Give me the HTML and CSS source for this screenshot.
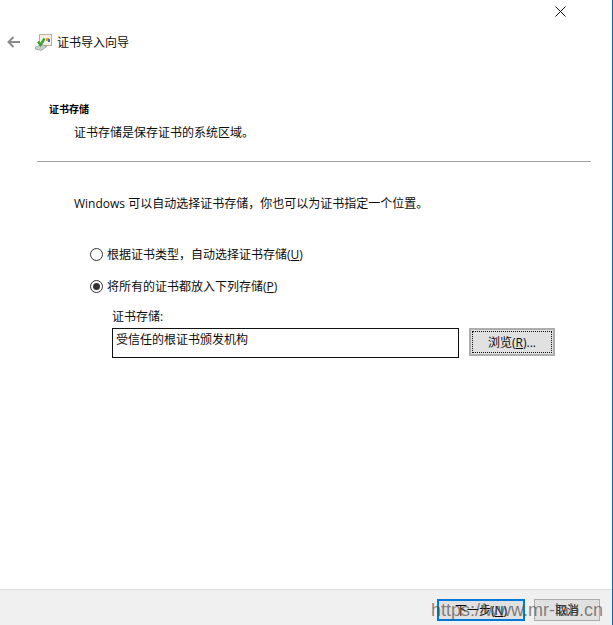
FILE: index.html
```html
<!DOCTYPE html>
<html lang="zh-CN">
<head>
    <meta charset="UTF-8">
    <title>证书导入向导</title>
    <link rel="stylesheet" href="styles.css">
</head>
<body>
    <div class="wizard">
        <div class="close-row">
            <svg class="close-icon" width="11" height="11" viewBox="0 0 11 11"><path d="M0.5 0.5L10.5 10.5M10.5 0.5L0.5 10.5" stroke="#111" stroke-width="1" fill="none"/></svg>
        </div>

        <div class="title-row">
            <svg class="back-icon" width="14" height="12" viewBox="0 0 14 12"><path d="M13 6H2M6.5 1L1.5 6L6.5 11" stroke="#8a8a8a" stroke-width="2" fill="none"/></svg>
            <svg class="wizard-icon" width="17" height="17" viewBox="0 0 17 17">
                <rect x="4.5" y="0.5" width="12" height="11" fill="#f6f1e6" stroke="#bdae98"/>
                <rect x="11" y="4" width="3" height="3" fill="#e0a030"/>
                <rect x="13" y="5" width="2" height="3" fill="#3b6fc0"/>
                <path d="M0.5 13L7 10.5L12 12.5L6 16.5L0.5 15Z" fill="#c9cdd0" stroke="#8c9296" stroke-width="0.7"/>
                <path d="M3 7.5L5.5 11L9.5 4.5" stroke="#3aa52e" stroke-width="2.4" fill="none"/>
            </svg>
            <span class="wizard-title">证书导入向导</span>
        </div>

        <div class="header">
            <div class="header-title">证书存储</div>
            <div class="header-desc">证书存储是保存证书的系统区域。</div>
        </div>

        <div class="divider"></div>

        <div class="content">
            <p class="intro">Windows 可以自动选择证书存储，你也可以为证书指定一个位置。</p>

            <div class="radio-row">
                <span class="radio"></span>
                <span>根据证书类型，自动选择证书存储(<u>U</u>)</span>
            </div>
            <div class="radio-row">
                <span class="radio checked"></span>
                <span>将所有的证书都放入下列存储(<u>P</u>)</span>
            </div>

            <div class="store">
                <div class="store-label">证书存储:</div>
                <div class="store-row">
                    <div class="store-input">受信任的根证书颁发机构</div>
                    <div class="btn browse"><span class="focus-ring">浏览(<u>R</u>)...</span></div>
                </div>
            </div>
        </div>

        <div class="footer">
            <div class="btn next">下一步(<u>N</u>)</div>
            <div class="btn cancel">取消</div>
            <div class="watermark">https://www.mr-lab.cn</div>
        </div>
    </div>
</body>
</html>
```

FILE: styles.css
```css
html, body {
    margin: 0;
    height: 100%;
}

body {
    font-family: "Open Sans", "Noto Sans CJK SC", sans-serif;
    font-size: 12px;
    color: #0c0c0c;
    background-color: #fff;
}

.wizard {
    width: 612px;
    height: 625px;
    border-right: 1px solid #0b63b5;
    display: flex;
    flex-direction: column;
}

.close-row {
    height: 33px;
    padding: 6px 46px 0 0;
    box-sizing: border-box;
    display: flex;
    justify-content: flex-end;
}

.title-row {
    display: flex;
    align-items: center;
    height: 18px;
    padding-left: 7px;
}

.wizard-icon {
    margin-left: 14px;
}

.wizard-title {
    margin-left: 5px;
}

.header {
    margin-top: 50px;
    padding-left: 49px;
}

.header-title {
    font-size: 10px;
    font-weight: bold;
    line-height: 16px;
    color: #000;
}

.header-desc {
    margin: 8px 0 0 25px;
    line-height: 16px;
}

.divider {
    margin: 20px 21px 0 37px;
    border-top: 1px solid #a0a0a0;
}

.content {
    flex: 1;
    padding-left: 74px;
}

.intro {
    margin: 34px 0 0;
    line-height: 16px;
    font-size: 12px;
}

.radio-row {
    display: flex;
    align-items: center;
    height: 16px;
    margin: 34px 0 0 16px;
}

.radio-row + .radio-row {
    margin-top: 16px;
}

.radio {
    width: 11px;
    height: 11px;
    border: 1px solid #333;
    border-radius: 50%;
    margin-right: 4px;
    position: relative;
}

.radio.checked::after {
    content: "";
    position: absolute;
    left: 2px;
    top: 2px;
    width: 7px;
    height: 7px;
    border-radius: 50%;
    background-color: #333;
}

.store {
    margin: 15px 0 0 38px;
}

.store-label {
    line-height: 16px;
}

.store-row {
    display: flex;
    margin-top: 3px;
}

.store-input {
    width: 339px;
    height: 22px;
    border: 1px solid #111;
    padding: 3px 3px;
    line-height: 16px;
}

.btn {
    box-sizing: border-box;
    background-color: #e1e1e1;
    border: 2px solid #adadad;
    display: flex;
    align-items: center;
    justify-content: center;
}

.browse {
    width: 86px;
    height: 28px;
    margin-left: 10px;
    padding: 1px;
}

.focus-ring {
    flex: 1;
    align-self: stretch;
    display: flex;
    align-items: center;
    justify-content: center;
    border: 1px dotted #111;
}

.footer {
    position: relative;
    height: 36px;
    box-sizing: border-box;
    border-top: 1px solid #dfdfdf;
    background-color: #f0f0f0;
    display: flex;
    justify-content: flex-end;
    align-items: flex-start;
    padding: 9px 12px 0 0;
}

.next {
    width: 88px;
    height: 22px;
    border-color: #0078d7;
}

.cancel {
    width: 66px;
    height: 22px;
    margin-left: 9px;
    border-width: 1px;
}

/* image watermark over the buttons */
.watermark {
    position: absolute;
    left: 431px;
    top: 8px;
    font-family: "Liberation Sans", sans-serif;
    font-size: 18px;
    line-height: 24px;
    color: rgba(80, 80, 80, 0.7);
    white-space: nowrap;
}
```
